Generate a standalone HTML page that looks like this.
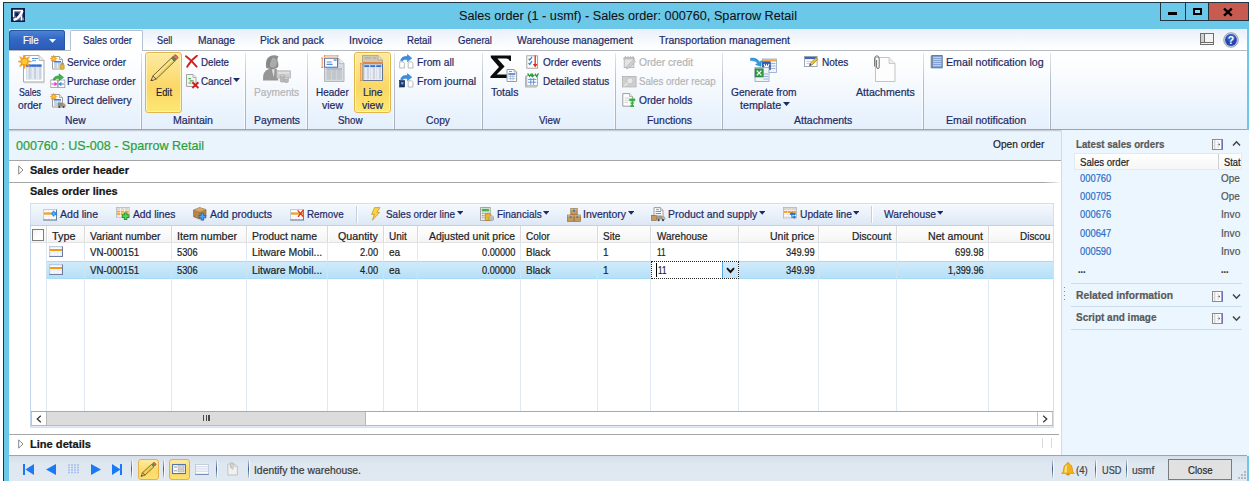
<!DOCTYPE html>
<html><head><meta charset="utf-8"><title>Sales order</title>
<style>
html,body{margin:0;padding:0;background:#fff;}
body{width:1249px;height:481px;overflow:hidden;position:relative;font-family:"Liberation Sans",sans-serif;}
#w div,#w span.t,#w svg{position:absolute;}
#w span.t{white-space:pre;line-height:16px;height:16px;transform-origin:0 50%;-webkit-text-stroke:0.22px currentColor;}
#w{position:absolute;left:0;top:0;width:1249px;height:481px;overflow:hidden;}
</style></head><body><div id="w">
<div style="left:3px;top:2px;width:1246px;height:479px;background:#1f3540"></div>
<div style="left:4px;top:3px;width:1245px;height:478px;background:#6bc8e8"></div>
<div style="left:9px;top:29px;width:1238px;height:452px;background:#fff"></div>
<div style="left:1160px;top:2px;width:89px;height:19px;background:#1f3540"></div>
<div style="left:1161px;top:3px;width:24px;height:17px;background:#6bc8e8"></div>
<div style="left:1186px;top:3px;width:22px;height:17px;background:#6bc8e8"></div>
<div style="left:1209px;top:3px;width:39px;height:17px;background:#c75b50"></div>
<div style="left:1168px;top:12px;width:9px;height:3px;background:#000"></div>
<div style="left:1193px;top:8px;width:9px;height:7px;box-sizing:border-box;border:2px solid #000;border-top-width:2px;background:#8fd6ee"></div>
<svg style="left:1222px;top:7px" width="12" height="10" viewBox="0 0 12 10"><path d="M2 1.6 L9.8 8.6 M9.8 1.6 L2 8.6" stroke="#000" stroke-width="2.4" fill="none"/></svg>
<div style="left:11px;top:8px;width:14px;height:14px;background:#0e1b50"></div>
<svg style="left:11px;top:8px" width="14" height="14" viewBox="0 0 14 14"><rect x="2" y="2" width="10" height="10.4" fill="#5a6a94"/><path d="M2 2.5 H12 M2.5 2 V9" stroke="#fff" stroke-width="1.3" fill="none"/><path d="M4.2 4.5 H7.4 V8 H4.2Z" fill="#101c4c"/><path d="M11.4 2.6 Q9.6 9.4 2.6 12" stroke="#fff" stroke-width="2.4" fill="none"/><path d="M5.6 6.2 L7.8 6.2 L5 10.2 Z" fill="#101c4c"/><path d="M10.4 7.6 V12.4" stroke="#fff" stroke-width="1.2"/><path d="M12.1 9.6 V12.4" stroke="#dfe4f0" stroke-width="0.9"/></svg>
<div style="left:9px;top:29px;width:1238px;height:21px;background:linear-gradient(#e8f0fa,#f6f9fd 55%,#ffffff)"></div>
<div style="left:9px;top:50px;width:1238px;height:1px;background:#b6bbc3"></div>
<div style="left:9px;top:30px;width:56px;height:20px;background:linear-gradient(#4f86d6,#3368c4 45%,#2a5bb8);border-radius:3px 3px 0 0;box-shadow:inset 0 0 0 1px #2a55a5"></div>
<svg style="left:49.4px;top:39.4px" width="7" height="4" viewBox="0 0 7 4"><path d="M0 0 H7 L3.5 3.8 Z" fill="#fff"/></svg>
<div style="left:70px;top:30px;width:73px;height:21px;box-sizing:border-box;background:#fff;border:1px solid #b4c2d4;border-bottom:none;border-radius:2px 2px 0 0"></div>
<svg style="left:1200px;top:33px" width="14" height="12" viewBox="0 0 14 12"><rect x="0.5" y="0.5" width="13" height="11" fill="#f4f4f4" stroke="#6e6e6e"/><rect x="1" y="1" width="3" height="8" fill="#cfcfcf"/><path d="M4.5 1 V9 M1 9.5 H13" stroke="#6e6e6e" fill="none"/></svg>
<svg style="left:1223px;top:32px" width="16" height="16" viewBox="0 0 16 16"><circle cx="8" cy="8" r="7.3" fill="#c9ced8" stroke="#8b93a3" stroke-width="0.8"/><circle cx="8" cy="8" r="5.9" fill="#2445b0"/><circle cx="8" cy="6" r="4" fill="#4a6fd6" opacity="0.55"/><text x="8" y="12" text-anchor="middle" font-family="Liberation Sans" font-weight="700" font-size="10.5" fill="#fff">?</text></svg>
<div style="left:9px;top:51px;width:1238px;height:78px;background:linear-gradient(#ffffff,#f8fbfe 35%,#eaf3fc 80%,#e5f0fc)"></div>
<div style="left:9px;top:129px;width:1238px;height:1px;background:#9da4ae"></div>
<div style="left:9px;top:130px;width:1238px;height:1px;background:#c8cfd8"></div>
<div style="left:9px;top:131px;width:1238px;height:1px;background:#e4e9ef"></div>
<div style="left:141px;top:53px;width:1px;height:76px;background:linear-gradient(rgba(176,186,200,0.35),#b3bcc9 40%,#a9b2bf)"></div>
<div style="left:140px;top:53px;width:1px;height:76px;background:rgba(255,255,255,0.65)"></div>
<div style="left:245px;top:53px;width:1px;height:76px;background:linear-gradient(rgba(176,186,200,0.35),#b3bcc9 40%,#a9b2bf)"></div>
<div style="left:244px;top:53px;width:1px;height:76px;background:rgba(255,255,255,0.65)"></div>
<div style="left:307px;top:53px;width:1px;height:76px;background:linear-gradient(rgba(176,186,200,0.35),#b3bcc9 40%,#a9b2bf)"></div>
<div style="left:306px;top:53px;width:1px;height:76px;background:rgba(255,255,255,0.65)"></div>
<div style="left:394px;top:53px;width:1px;height:76px;background:linear-gradient(rgba(176,186,200,0.35),#b3bcc9 40%,#a9b2bf)"></div>
<div style="left:393px;top:53px;width:1px;height:76px;background:rgba(255,255,255,0.65)"></div>
<div style="left:482px;top:53px;width:1px;height:76px;background:linear-gradient(rgba(176,186,200,0.35),#b3bcc9 40%,#a9b2bf)"></div>
<div style="left:481px;top:53px;width:1px;height:76px;background:rgba(255,255,255,0.65)"></div>
<div style="left:615px;top:53px;width:1px;height:76px;background:linear-gradient(rgba(176,186,200,0.35),#b3bcc9 40%,#a9b2bf)"></div>
<div style="left:614px;top:53px;width:1px;height:76px;background:rgba(255,255,255,0.65)"></div>
<div style="left:722px;top:53px;width:1px;height:76px;background:linear-gradient(rgba(176,186,200,0.35),#b3bcc9 40%,#a9b2bf)"></div>
<div style="left:721px;top:53px;width:1px;height:76px;background:rgba(255,255,255,0.65)"></div>
<div style="left:923px;top:53px;width:1px;height:76px;background:linear-gradient(rgba(176,186,200,0.35),#b3bcc9 40%,#a9b2bf)"></div>
<div style="left:922px;top:53px;width:1px;height:76px;background:rgba(255,255,255,0.65)"></div>
<div style="left:1050px;top:53px;width:1px;height:76px;background:linear-gradient(rgba(176,186,200,0.35),#b3bcc9 40%,#a9b2bf)"></div>
<div style="left:1049px;top:53px;width:1px;height:76px;background:rgba(255,255,255,0.65)"></div>
<div style="left:145px;top:52px;width:37px;height:61px;box-sizing:border-box;background:linear-gradient(#fdeaa3,#fce07e 35%,#fbd764 58%,#fde773);border:1px solid #e3b64c;border-radius:3px;box-shadow:inset 0 0 0 1px rgba(255,248,210,0.7)"></div>
<div style="left:354px;top:52px;width:37px;height:61px;box-sizing:border-box;background:linear-gradient(#fdeaa3,#fce07e 35%,#fbd764 58%,#fde773);border:1px solid #e3b64c;border-radius:3px;box-shadow:inset 0 0 0 1px rgba(255,248,210,0.7)"></div>
<svg style="left:782.6px;top:102.4px" width="7" height="4" viewBox="0 0 7 4"><path d="M0 0 H7 L3.5 4 Z" fill="#1e2a66"/></svg>
<svg style="left:233.4px;top:78.4px" width="7" height="4" viewBox="0 0 7 4"><path d="M0 0 H7 L3.5 4 Z" fill="#1e2a66"/></svg>
<div style="left:9px;top:132px;width:1053px;height:28px;background:#eaf4fc"></div>
<div style="left:9px;top:160px;width:1053px;height:1px;background:#a6a6a6"></div>
<div style="left:9px;top:182px;width:1050px;height:1px;background:linear-gradient(90deg,#a6a6a6 98.5%,rgba(166,166,166,0.2))"></div>
<svg style="left:18px;top:165px" width="6" height="10" viewBox="0 0 6 10"><path d="M0.7 0.9 L5 5 L0.7 9.1 Z" fill="#fff" stroke="#7a7a7a" stroke-width="0.9"/></svg>
<div style="left:30px;top:203px;width:1024px;height:23px;box-sizing:border-box;background:linear-gradient(#f6f9fd,#e9f1fa 50%,#dde8f5);border:1px solid #d3dfee"></div>
<svg style="left:456.6px;top:211.2px" width="6.4" height="3.7" viewBox="0 0 7 4" preserveAspectRatio="none"><path d="M0 0 H7 L3.5 4 Z" fill="#1e2a66"/></svg>
<svg style="left:542.8px;top:211.2px" width="6.4" height="3.7" viewBox="0 0 7 4" preserveAspectRatio="none"><path d="M0 0 H7 L3.5 4 Z" fill="#1e2a66"/></svg>
<svg style="left:628.1px;top:211.2px" width="6.4" height="3.7" viewBox="0 0 7 4" preserveAspectRatio="none"><path d="M0 0 H7 L3.5 4 Z" fill="#1e2a66"/></svg>
<svg style="left:759px;top:211.2px" width="6.4" height="3.7" viewBox="0 0 7 4" preserveAspectRatio="none"><path d="M0 0 H7 L3.5 4 Z" fill="#1e2a66"/></svg>
<svg style="left:852.6px;top:211.2px" width="6.4" height="3.7" viewBox="0 0 7 4" preserveAspectRatio="none"><path d="M0 0 H7 L3.5 4 Z" fill="#1e2a66"/></svg>
<svg style="left:936.6px;top:211.2px" width="6.4" height="3.7" viewBox="0 0 7 4" preserveAspectRatio="none"><path d="M0 0 H7 L3.5 4 Z" fill="#1e2a66"/></svg>
<div style="left:356px;top:206px;width:1px;height:17px;background:#c3d0e0"></div>
<div style="left:357px;top:206px;width:1px;height:17px;background:#fff"></div>
<div style="left:871px;top:206px;width:1px;height:17px;background:#c3d0e0"></div>
<div style="left:872px;top:206px;width:1px;height:17px;background:#fff"></div>
<div style="left:30px;top:226px;width:1024px;height:201px;box-sizing:border-box;background:#fff;border-left:1px solid #c3d5ea;border-right:1px solid #d5dfec"></div>
<div style="left:30px;top:225px;width:1024px;height:1px;background:#bcd2ea"></div>
<div style="left:31px;top:226px;width:1022px;height:17px;background:linear-gradient(#fdfdfd,#f9f9f9 60%,#f2f2f2)"></div>
<div style="left:31px;top:242px;width:1022px;height:1px;background:#e2e2e2"></div>
<div style="left:46px;top:261px;width:1007px;height:18px;box-sizing:border-box;background:linear-gradient(#d0ebfb,#b5e0f8);border-top:1px solid #a8d9f5;border-bottom:1px solid #a9dbf6"></div>
<div style="left:46px;top:226px;width:1px;height:16px;background:#d9d9d9"></div>
<div style="left:47px;top:226px;width:1px;height:16px;background:#fff"></div>
<div style="left:46px;top:243px;width:1px;height:168px;background:#e1e9f5"></div>
<div style="left:46px;top:261px;width:1px;height:18px;background:#cfe4f3"></div>
<div style="left:84px;top:226px;width:1px;height:16px;background:#d9d9d9"></div>
<div style="left:85px;top:226px;width:1px;height:16px;background:#fff"></div>
<div style="left:84px;top:243px;width:1px;height:168px;background:#e1e9f5"></div>
<div style="left:84px;top:261px;width:1px;height:18px;background:#cfe4f3"></div>
<div style="left:171px;top:226px;width:1px;height:16px;background:#d9d9d9"></div>
<div style="left:172px;top:226px;width:1px;height:16px;background:#fff"></div>
<div style="left:171px;top:243px;width:1px;height:168px;background:#e1e9f5"></div>
<div style="left:171px;top:261px;width:1px;height:18px;background:#cfe4f3"></div>
<div style="left:246px;top:226px;width:1px;height:16px;background:#d9d9d9"></div>
<div style="left:247px;top:226px;width:1px;height:16px;background:#fff"></div>
<div style="left:246px;top:243px;width:1px;height:168px;background:#e1e9f5"></div>
<div style="left:246px;top:261px;width:1px;height:18px;background:#cfe4f3"></div>
<div style="left:327px;top:226px;width:1px;height:16px;background:#d9d9d9"></div>
<div style="left:328px;top:226px;width:1px;height:16px;background:#fff"></div>
<div style="left:327px;top:243px;width:1px;height:168px;background:#e1e9f5"></div>
<div style="left:327px;top:261px;width:1px;height:18px;background:#cfe4f3"></div>
<div style="left:383px;top:226px;width:1px;height:16px;background:#d9d9d9"></div>
<div style="left:384px;top:226px;width:1px;height:16px;background:#fff"></div>
<div style="left:383px;top:243px;width:1px;height:168px;background:#e1e9f5"></div>
<div style="left:383px;top:261px;width:1px;height:18px;background:#cfe4f3"></div>
<div style="left:417px;top:226px;width:1px;height:16px;background:#d9d9d9"></div>
<div style="left:418px;top:226px;width:1px;height:16px;background:#fff"></div>
<div style="left:417px;top:243px;width:1px;height:168px;background:#e1e9f5"></div>
<div style="left:417px;top:261px;width:1px;height:18px;background:#cfe4f3"></div>
<div style="left:520px;top:226px;width:1px;height:16px;background:#d9d9d9"></div>
<div style="left:521px;top:226px;width:1px;height:16px;background:#fff"></div>
<div style="left:520px;top:243px;width:1px;height:168px;background:#e1e9f5"></div>
<div style="left:520px;top:261px;width:1px;height:18px;background:#cfe4f3"></div>
<div style="left:597px;top:226px;width:1px;height:16px;background:#d9d9d9"></div>
<div style="left:598px;top:226px;width:1px;height:16px;background:#fff"></div>
<div style="left:597px;top:243px;width:1px;height:168px;background:#e1e9f5"></div>
<div style="left:597px;top:261px;width:1px;height:18px;background:#cfe4f3"></div>
<div style="left:650px;top:226px;width:1px;height:16px;background:#d9d9d9"></div>
<div style="left:651px;top:226px;width:1px;height:16px;background:#fff"></div>
<div style="left:650px;top:243px;width:1px;height:168px;background:#e1e9f5"></div>
<div style="left:650px;top:261px;width:1px;height:18px;background:#cfe4f3"></div>
<div style="left:738px;top:226px;width:1px;height:16px;background:#d9d9d9"></div>
<div style="left:739px;top:226px;width:1px;height:16px;background:#fff"></div>
<div style="left:738px;top:243px;width:1px;height:168px;background:#e1e9f5"></div>
<div style="left:738px;top:261px;width:1px;height:18px;background:#cfe4f3"></div>
<div style="left:818px;top:226px;width:1px;height:16px;background:#d9d9d9"></div>
<div style="left:819px;top:226px;width:1px;height:16px;background:#fff"></div>
<div style="left:818px;top:243px;width:1px;height:168px;background:#e1e9f5"></div>
<div style="left:818px;top:261px;width:1px;height:18px;background:#cfe4f3"></div>
<div style="left:896px;top:226px;width:1px;height:16px;background:#d9d9d9"></div>
<div style="left:897px;top:226px;width:1px;height:16px;background:#fff"></div>
<div style="left:896px;top:243px;width:1px;height:168px;background:#e1e9f5"></div>
<div style="left:896px;top:261px;width:1px;height:18px;background:#cfe4f3"></div>
<div style="left:988px;top:226px;width:1px;height:16px;background:#d9d9d9"></div>
<div style="left:989px;top:226px;width:1px;height:16px;background:#fff"></div>
<div style="left:988px;top:243px;width:1px;height:168px;background:#e1e9f5"></div>
<div style="left:988px;top:261px;width:1px;height:18px;background:#cfe4f3"></div>
<div style="left:32px;top:229px;width:12px;height:12px;box-sizing:border-box;border:1px solid #7d7d7d;background:linear-gradient(135deg,#f2f2f2,#fff 60%)"></div>
<div style="left:651px;top:261px;width:88px;height:18px;box-sizing:border-box;background:#fff;border:1px dotted #222"></div>
<div style="left:722px;top:262px;width:1px;height:16px;background:#58a6de"></div>
<div style="left:723px;top:262px;width:15px;height:16px;background:linear-gradient(#d6ecfb,#c3e2f9)"></div>
<svg style="left:726px;top:267px" width="9" height="7" viewBox="0 0 9 7"><path d="M1 1.2 L4.5 5 L8 1.2" stroke="#111" stroke-width="1.9" fill="none"/></svg>
<div style="left:656px;top:263px;width:1px;height:14px;background:#000"></div>
<svg style="left:49px;top:246.2px" width="14" height="11" viewBox="0 0 14 11"><rect x="0.5" y="0.5" width="13" height="10" fill="#e0e9f7" stroke="#bcc7da" stroke-width="0.9"/><path d="M1 2.7 H13 M1 5.4 H13 M1 8 H13 M3.8 1 V10 M7 1 V10 M10.2 1 V10" stroke="#fff" stroke-width="0.9"/><rect x="0.9" y="3" width="12.2" height="2.1" fill="#f29a1c"/><path d="M0.3 10.6 H13.9 M13.5 0.6 V10.8" stroke="#6b7a96" stroke-width="1" fill="none"/></svg>
<svg style="left:49px;top:264.4px" width="14" height="11" viewBox="0 0 14 11"><rect x="0.5" y="0.5" width="13" height="10" fill="#e0e9f7" stroke="#bcc7da" stroke-width="0.9"/><path d="M1 2.7 H13 M1 5.4 H13 M1 8 H13 M3.8 1 V10 M7 1 V10 M10.2 1 V10" stroke="#fff" stroke-width="0.9"/><rect x="0.9" y="3" width="12.2" height="2.1" fill="#f29a1c"/><path d="M0.3 10.6 H13.9 M13.5 0.6 V10.8" stroke="#6b7a96" stroke-width="1" fill="none"/></svg>
<div style="left:31px;top:411px;width:1022px;height:1px;background:#a9a9a9"></div>
<div style="left:31px;top:412px;width:1022px;height:13px;background:#fff"></div>
<div style="left:31px;top:425px;width:1022px;height:1px;background:#b9b9b9"></div>
<div style="left:31px;top:426px;width:1022px;height:2px;background:#e1eaf5"></div>
<div style="left:31px;top:412px;width:1px;height:13px;background:#c4c4c4"></div>
<div style="left:46px;top:412px;width:320px;height:13px;background:#dcdcdc;box-sizing:border-box;border-left:1px solid #b8b8b8;border-right:1px solid #b8b8b8"></div>
<div style="left:202.8px;top:415px;width:1.6px;height:6px;background:#4a4a4a"></div>
<div style="left:205.6px;top:415px;width:1.6px;height:6px;background:#4a4a4a"></div>
<div style="left:208.3px;top:415px;width:1.6px;height:6px;background:#4a4a4a"></div>
<div style="left:1037px;top:412px;width:1px;height:13px;background:#c4c4c4"></div>
<div style="left:1052px;top:412px;width:1px;height:13px;background:#c4c4c4"></div>
<svg style="left:36px;top:415px" width="6" height="8" viewBox="0 0 6 8"><path d="M4.8 0.8 L1.2 4 L4.8 7.2" stroke="#333" stroke-width="1.2" fill="none"/></svg>
<svg style="left:1042px;top:415px" width="6" height="8" viewBox="0 0 6 8"><path d="M1.2 0.8 L4.8 4 L1.2 7.2" stroke="#333" stroke-width="1.2" fill="none"/></svg>
<div style="left:30px;top:427px;width:1024px;height:1px;background:#d5e0ee"></div>
<div style="left:9px;top:434px;width:1050px;height:1px;background:#a6a6a6"></div>
<svg style="left:18px;top:439px" width="6" height="10" viewBox="0 0 6 10"><path d="M0.7 0.9 L5 5 L0.7 9.1 Z" fill="#fff" stroke="#7a7a7a" stroke-width="0.9"/></svg>
<div style="left:1042px;top:438px;width:1px;height:10px;background:#d9d9d9"></div>
<div style="left:1051px;top:438px;width:1px;height:10px;background:#d9d9d9"></div>
<div style="left:1061px;top:130px;width:1px;height:326px;background:#cbdceb"></div>
<div style="left:1062px;top:130px;width:1185px;height:326px;background:#ecf6fe"></div>
<div style="left:1062px;top:130px;width:185px;height:326px;background:#ecf6fe"></div>
<div style="left:1064px;top:287px;width:1px;height:1px;background:#8a8a8a"></div>
<div style="left:1064px;top:291px;width:1px;height:1px;background:#8a8a8a"></div>
<div style="left:1064px;top:295px;width:1px;height:1px;background:#8a8a8a"></div>
<div style="left:1064px;top:299px;width:1px;height:1px;background:#8a8a8a"></div>
<div style="left:1075px;top:154px;width:166px;height:15px;background:linear-gradient(#ffffff,#f6f6f6);box-shadow:0 0 0 1px #e3e9f0"></div>
<div style="left:1218px;top:154px;width:1px;height:15px;background:#d0d0d0"></div>
<div style="left:1071px;top:283px;width:171px;height:1px;background:#c9dbec"></div>
<div style="left:1071px;top:306px;width:171px;height:1px;background:#c9dbec"></div>
<div style="left:1071px;top:329px;width:171px;height:1px;background:#c9dbec"></div>
<svg style="left:1212px;top:139px" width="11" height="11" viewBox="0 0 11 11"><rect x="0.5" y="0.5" width="10" height="10" fill="#fff" stroke="#8a8a8a"/><path d="M2.8 1 V10" stroke="#c4c4c4"/><path d="M1 3.6 H2.8 M1 6.8 H2.8" stroke="#d8d8d8" stroke-width="0.8"/><path d="M4.6 3 H7 M4.6 8 H7 M4.6 5.5 H6.6" stroke="#c9c9c9" stroke-width="0.8"/><path d="M6.6 4 L8.2 5.5 L6.6 7 Z" fill="#555"/><path d="M10 1 V10" stroke="#5b5fd0" stroke-width="1.2"/></svg>
<svg style="left:1212px;top:291px" width="11" height="11" viewBox="0 0 11 11"><rect x="0.5" y="0.5" width="10" height="10" fill="#fff" stroke="#8a8a8a"/><path d="M2.8 1 V10" stroke="#c4c4c4"/><path d="M1 3.6 H2.8 M1 6.8 H2.8" stroke="#d8d8d8" stroke-width="0.8"/><path d="M4.6 3 H7 M4.6 8 H7 M4.6 5.5 H6.6" stroke="#c9c9c9" stroke-width="0.8"/><path d="M6.6 4 L8.2 5.5 L6.6 7 Z" fill="#555"/><path d="M10 1 V10" stroke="#5b5fd0" stroke-width="1.2"/></svg>
<svg style="left:1212px;top:313px" width="11" height="11" viewBox="0 0 11 11"><rect x="0.5" y="0.5" width="10" height="10" fill="#fff" stroke="#8a8a8a"/><path d="M2.8 1 V10" stroke="#c4c4c4"/><path d="M1 3.6 H2.8 M1 6.8 H2.8" stroke="#d8d8d8" stroke-width="0.8"/><path d="M4.6 3 H7 M4.6 8 H7 M4.6 5.5 H6.6" stroke="#c9c9c9" stroke-width="0.8"/><path d="M6.6 4 L8.2 5.5 L6.6 7 Z" fill="#555"/><path d="M10 1 V10" stroke="#5b5fd0" stroke-width="1.2"/></svg>
<svg style="left:1232.2px;top:140.2px" width="9" height="7" viewBox="0 0 9 7"><path d="M1 5.6 L4.5 1.8 L8 5.6" stroke="#444" stroke-width="1.5" fill="none"/></svg>
<svg style="left:1232px;top:293px" width="9" height="7" viewBox="0 0 9 7"><path d="M1 1.4 L4.5 5.2 L8 1.4" stroke="#444" stroke-width="1.5" fill="none"/></svg>
<svg style="left:1232px;top:315px" width="9" height="7" viewBox="0 0 9 7"><path d="M1 1.4 L4.5 5.2 L8 1.4" stroke="#444" stroke-width="1.5" fill="none"/></svg>
<div style="left:9px;top:455px;width:1238px;height:1px;background:#98a5b5"></div>
<div style="left:9px;top:456px;width:1238px;height:25px;background:linear-gradient(#d5dfea,#dfe7f0 30%,#e0e8f1)"></div>
<div style="left:131px;top:460px;width:1px;height:18px;background:linear-gradient(rgba(60,90,130,0.2),#40608a 50%,rgba(60,90,130,0.2))"></div>
<div style="left:132px;top:460px;width:1px;height:18px;background:rgba(255,255,255,0.7)"></div>
<div style="left:163px;top:460px;width:1px;height:18px;background:linear-gradient(rgba(60,90,130,0.2),#40608a 50%,rgba(60,90,130,0.2))"></div>
<div style="left:164px;top:460px;width:1px;height:18px;background:rgba(255,255,255,0.7)"></div>
<div style="left:216px;top:460px;width:1px;height:18px;background:linear-gradient(rgba(60,90,130,0.2),#40608a 50%,rgba(60,90,130,0.2))"></div>
<div style="left:217px;top:460px;width:1px;height:18px;background:rgba(255,255,255,0.7)"></div>
<div style="left:248px;top:460px;width:1px;height:18px;background:linear-gradient(rgba(60,90,130,0.2),#40608a 50%,rgba(60,90,130,0.2))"></div>
<div style="left:249px;top:460px;width:1px;height:18px;background:rgba(255,255,255,0.7)"></div>
<div style="left:1052px;top:460px;width:1px;height:18px;background:linear-gradient(rgba(60,90,130,0.2),#40608a 50%,rgba(60,90,130,0.2))"></div>
<div style="left:1053px;top:460px;width:1px;height:18px;background:rgba(255,255,255,0.7)"></div>
<div style="left:1095px;top:460px;width:1px;height:18px;background:linear-gradient(rgba(60,90,130,0.2),#40608a 50%,rgba(60,90,130,0.2))"></div>
<div style="left:1096px;top:460px;width:1px;height:18px;background:rgba(255,255,255,0.7)"></div>
<div style="left:1126px;top:460px;width:1px;height:18px;background:linear-gradient(rgba(60,90,130,0.2),#40608a 50%,rgba(60,90,130,0.2))"></div>
<div style="left:1127px;top:460px;width:1px;height:18px;background:rgba(255,255,255,0.7)"></div>
<div style="left:138px;top:459px;width:21px;height:21px;box-sizing:border-box;background:linear-gradient(#fde9a0,#fcd968 60%,#fde173);border:1px solid #e5b045;border-radius:3px"></div>
<div style="left:169px;top:459px;width:21px;height:21px;box-sizing:border-box;background:linear-gradient(#fde9a0,#fcd968 60%,#fde173);border:1px solid #e5b045;border-radius:3px"></div>
<div style="left:1168px;top:459px;width:64px;height:21px;box-sizing:border-box;background:#e1e1e1;border:1px solid #7c7c7c"></div>
<svg style="left:22px;top:463.7px" width="101" height="11" viewBox="0 0 101 11"><path d="M1 0 H3 V11 H1 Z M12 0 V11 L3.5 5.5 Z" fill="#1b79f5"/><path d="M34 0 V11 L24 5.5 Z" fill="#1b79f5"/><path d="M69 0 V11 L79 5.5 Z" fill="#1b79f5"/><path d="M90 0 V11 L98.5 5.5 Z M98 0 H100 V11 H98 Z" fill="#1b79f5"/></svg>
<svg style="left:68px;top:464px" width="11" height="11" viewBox="0 0 11 11"><path d="M0 1 H11 M0 3.5 H11 M0 6 H11 M0 8.5 H11" stroke="#a3c0ef" stroke-width="1.6" stroke-dasharray="2 1"/></svg>
<div style="left:1244px;top:471px;width:2px;height:2px;background:#b0b8c2"></div>
<div style="left:1241px;top:474px;width:2px;height:2px;background:#b0b8c2"></div>
<div style="left:1244px;top:474px;width:2px;height:2px;background:#b0b8c2"></div>
<div style="left:1238px;top:477px;width:2px;height:2px;background:#b0b8c2"></div>
<div style="left:1241px;top:477px;width:2px;height:2px;background:#b0b8c2"></div>
<div style="left:1244px;top:477px;width:2px;height:2px;background:#b0b8c2"></div>
<svg style="left:17.5px;top:55px" width="28" height="29" viewBox="0 0 28 29"><path d="M6.5 27.5 H27 V28.3 H6.5Z" fill="#d9d9d9"/><path d="M5.5 0.5 H21.0 L26.0 5.5 V27.0 H5.5 Z" fill="#fff" stroke="#a9a9a9" stroke-width="1"/><path d="M21.0 0.5 V5.5 H26.0" fill="#ececec" stroke="#a9a9a9" stroke-width="0.8"/><rect x="8" y="9.6" width="15.5" height="2" fill="#3f7fd6"/><rect x="8" y="12" width="4.9" height="12.5" fill="#c9d1de"/><rect x="8" y="9.6" width="4.9" height="2" fill="#2f6fd0"/><rect x="8.6" y="12.4" width="2" height="12" fill="#e6ebf3"/><rect x="13.3" y="12" width="4.9" height="12.5" fill="#c9d1de"/><rect x="13.3" y="9.6" width="4.9" height="2" fill="#2f6fd0"/><rect x="13.9" y="12.4" width="2" height="12" fill="#e6ebf3"/><rect x="18.6" y="12" width="4.9" height="12.5" fill="#c9d1de"/><rect x="18.6" y="9.6" width="4.9" height="2" fill="#2f6fd0"/><rect x="19.200000000000003" y="12.4" width="2" height="12" fill="#e6ebf3"/><path d="M14 3.5 H20 M14 5.8 H18" stroke="#5b93dd" stroke-width="1.1"/><polygon points="6.60,-0.60 7.86,3.55 11.69,1.51 9.65,5.34 13.80,6.60 9.65,7.86 11.69,11.69 7.86,9.65 6.60,13.80 5.34,9.65 1.51,11.69 3.55,7.86 -0.60,6.60 3.55,5.34 1.51,1.51 5.34,3.55" fill="#f7a11a" stroke="#f08a0c" stroke-width="0.4"/><circle cx="6.6" cy="6.6" r="2.59" fill="#fdc93a"/></svg>
<svg style="left:49.5px;top:54.5px" width="16" height="16" viewBox="0 0 16 16"><path d="M2.5 1.5 H9.5 L12.5 4.5 V14.0 H2.5 Z" fill="#fff" stroke="#9c9c9c" stroke-width="1"/><path d="M9.5 1.5 V4.5 H12.5" fill="#ececec" stroke="#9c9c9c" stroke-width="0.8"/><rect x="4" y="6" width="7" height="1.6" fill="#3f7fd6"/><rect x="4" y="8" width="3" height="5" fill="#c9d1de"/><rect x="7.6" y="8" width="3.4" height="5" fill="#c9d1de"/><polygon points="3.60,0.00 4.25,2.03 6.15,1.05 5.17,2.95 7.20,3.60 5.17,4.25 6.15,6.15 4.25,5.17 3.60,7.20 2.95,5.17 1.05,6.15 2.03,4.25 0.00,3.60 2.03,2.95 1.05,1.05 2.95,2.03" fill="#f7a11a" stroke="#f08a0c" stroke-width="0.4"/><circle cx="3.6" cy="3.6" r="1.30" fill="#fdc93a"/><rect x="10.6" y="9.4" width="3.6" height="4.8" rx="0.6" fill="#eab92a" stroke="#a87c10" stroke-width="0.5"/><path d="M11.4 9.4 V8 Q12.4 6.4 13.4 8 V9.4" fill="none" stroke="#8a8a8a" stroke-width="0.8"/></svg>
<svg style="left:49.5px;top:73px" width="16" height="16" viewBox="0 0 16 16"><rect x="0.8" y="7" width="6.6" height="7.6" fill="#fff" stroke="#9c9c9c" stroke-width="0.8"/><rect x="8.2" y="7" width="6.6" height="7.6" fill="#fff" stroke="#9c9c9c" stroke-width="0.8"/><path d="M1.6 11 H6.4 M4.4 9.4 L6.6 11 L4.4 12.6" stroke="#e33cbf" stroke-width="1.2" fill="none"/><path d="M14 11 H9.4 M11.4 9.4 L9.2 11 L11.4 12.6" stroke="#2f8fe0" stroke-width="1.2" fill="none"/><path d="M3 7 Q4 2.6 9 3 V0.8 L13.6 4.4 L9 7.6 V5.4 Q6 5 5 7 Z" fill="#3fb54a" stroke="#23862e" stroke-width="0.5"/></svg>
<svg style="left:50px;top:92.6px" width="16" height="16" viewBox="0 0 16 16"><path d="M2.5 1.5 H9.5 L12.5 4.5 V14.0 H2.5 Z" fill="#fff" stroke="#9c9c9c" stroke-width="1"/><path d="M9.5 1.5 V4.5 H12.5" fill="#ececec" stroke="#9c9c9c" stroke-width="0.8"/><rect x="4" y="6" width="7" height="1.6" fill="#3f7fd6"/><rect x="4" y="8" width="3" height="5" fill="#c9d1de"/><rect x="7.6" y="8" width="3.4" height="5" fill="#c9d1de"/><polygon points="3.60,0.00 4.25,2.03 6.15,1.05 5.17,2.95 7.20,3.60 5.17,4.25 6.15,6.15 4.25,5.17 3.60,7.20 2.95,5.17 1.05,6.15 2.03,4.25 0.00,3.60 2.03,2.95 1.05,1.05 2.95,2.03" fill="#f7a11a" stroke="#f08a0c" stroke-width="0.4"/><circle cx="3.6" cy="3.6" r="1.30" fill="#fdc93a"/><rect x="7.6" y="9.6" width="4.6" height="3.8" fill="#8a8a8a"/><path d="M12.2 10.6 H14.2 L15.4 12 V13.4 H12.2 Z" fill="#b8a070" stroke="#7c7c7c" stroke-width="0.4"/><circle cx="9.4" cy="14" r="1.1" fill="#444"/><circle cx="13.6" cy="14" r="1.1" fill="#444"/></svg>
<svg style="left:149.1px;top:52.9px" width="32.3" height="28.5" viewBox="-3 -1 34 30"><g transform="rotate(-44 14 14)"><rect x="-1.5" y="11.6" width="27" height="4.8" fill="#f6d56a" stroke="#5b4a1e" stroke-width="0.8"/><path d="M-1.5 13.2 H25.5" stroke="#fbe9a6" stroke-width="1.2"/><path d="M-1.5 11.6 L-7 14 L-1.5 16.4 Z" fill="#e8c9a0" stroke="#5b4a1e" stroke-width="0.8"/><path d="M-7 14 L-5 13.1 V14.9 Z" fill="#333"/><rect x="25.5" y="11.6" width="2.2" height="4.8" fill="#3f9a58" stroke="#5b4a1e" stroke-width="0.5"/><rect x="27.7" y="11.6" width="3.4" height="4.8" rx="1" fill="#e46a6a" stroke="#5b4a1e" stroke-width="0.6"/></g></svg>
<svg style="left:185px;top:55.2px" width="13" height="13" viewBox="0 0 13 13"><path d="M1 1.2 Q5 4 11.6 11.6" stroke="#d3201f" stroke-width="2" fill="none" stroke-linecap="round"/><path d="M12 0.8 Q6 5 2.2 11.8" stroke="#d3201f" stroke-width="1.8" fill="none" stroke-linecap="round"/></svg>
<svg style="left:184.6px;top:73.6px" width="15" height="15" viewBox="0 0 15 15"><path d="M1.5 0.5 H8.0 L11.0 3.5 V12.5 H1.5 Z" fill="#f4f4f4" stroke="#a4a4a4" stroke-width="1"/><path d="M8.0 0.5 V3.5 H11.0" fill="#ececec" stroke="#a4a4a4" stroke-width="0.8"/><path d="M3.4 4.6 H6 M4.6 6.8 H8.6 M3.4 9 H6.4" stroke="#4fae4a" stroke-width="1.2"/><path d="M7.4 8.2 L13.4 14 M13.4 8.2 L7.4 14" stroke="#d3201f" stroke-width="1.9"/></svg>
<svg style="left:261.6px;top:54.6px" width="30" height="29" viewBox="0 0 30 29"><path d="M1 25.4 Q0.4 15.6 7 14 L14.6 14 Q16.2 16 16.2 25.4 Z" fill="#969696"/><path d="M9.8 14.2 L12.6 14.2 L11.8 22.5 Z" fill="#e2e2e2"/><path d="M4.2 13 Q2.6 3 9 0.8 Q13 -0.4 16.6 1.6 Q15 3 15.6 6 Q17.2 10 15.6 12.6 Q13 14.6 8 14 Z" fill="#8d8d8d"/><ellipse cx="11" cy="7.8" rx="3.9" ry="5" fill="#ababab"/><path d="M5 9 Q5 3 11 2.4 Q8 5 7.6 12 Q6 12 5 9Z" fill="#868686"/><rect x="14.8" y="15.8" width="13.8" height="7.2" fill="#cdcdcd" stroke="#b2b2b2" stroke-width="0.7"/><rect x="16.2" y="17" width="11" height="1.8" fill="#e1e1e1"/><path d="M18.2 20.4 V26.599999999999998 Q20.3 28.0 22.4 26.599999999999998 V20.4 Z" fill="#b9b9b9" stroke="#9b9b9b" stroke-width="0.5"/><ellipse cx="20.3" cy="20.4" rx="2.1" ry="0.9" fill="#dedede" stroke="#a2a2a2" stroke-width="0.5"/><path d="M22 23.2 V26.999999999999996 Q24.2 28.4 26.4 26.999999999999996 V23.2 Z" fill="#b9b9b9" stroke="#9b9b9b" stroke-width="0.5"/><ellipse cx="24.2" cy="23.2" rx="2.2" ry="0.9" fill="#dedede" stroke="#a2a2a2" stroke-width="0.5"/></svg>
<svg style="left:320.5px;top:54.6px" width="24" height="28" viewBox="0 0 24 28"><path d="M3.5 3.5 H18.0 L23.0 8.5 V26.5 H3.5 Z" fill="#d8dade" stroke="#b4b7bd" stroke-width="1"/><path d="M18.0 3.5 V8.5 H23.0" fill="#ececec" stroke="#b4b7bd" stroke-width="0.8"/><rect x="5.5" y="13.2" width="15.5" height="1.6" fill="#9fb7d8"/><rect x="5.5" y="15" width="4.6" height="9.8" fill="#c2c6cd"/><rect x="10.8" y="15" width="4.6" height="9.8" fill="#c2c6cd"/><rect x="16.1" y="15" width="4.6" height="9.8" fill="#c2c6cd"/><rect x="3.6" y="3.2" width="13" height="9" fill="#fff" stroke="#566c94" stroke-width="1"/><rect x="12.6" y="4.4" width="3" height="1.3" fill="#3f86dd"/><path d="M5.6 7 H10.8 M5.6 9.4 H11.6" stroke="#4a8fe0" stroke-width="1.2"/><path d="M1.2 3 V12.4 M0.2 3 H2.4 M0.2 12.4 H2.4 M3.4 0.9 H16.8 M3.4 0 V2 M16.8 0 V2" stroke="#ef7f3a" stroke-width="0.9" fill="none"/></svg>
<svg style="left:360px;top:54.8px" width="24" height="27" viewBox="0 0 24 27"><path d="M2.5 0.5 H18 L22.5 5 V7.5 H2.5 Z" fill="#cfc7b0" stroke="#a8a08a" stroke-width="0.8"/><path d="M18 0.5 V5 H22.5" fill="#e1dccb" stroke="#a8a08a" stroke-width="0.7"/><path d="M5 3 H11 M13 3 H16" stroke="#a8a7a0" stroke-width="1.1"/><path d="M2 7.7 H23" stroke="#ef7f3a" stroke-width="0.9"/><rect x="3" y="8.9" width="19.5" height="16.5" fill="#fff" stroke="#51658e" stroke-width="0.9"/><rect x="4.2" y="10.2" width="5.2" height="2" fill="#2f6fd0"/><rect x="4.2" y="12.4" width="5.2" height="12" fill="#cdd4e0"/><rect x="4.9" y="12.6" width="2" height="11.6" fill="#e9edf4"/><rect x="10.2" y="10.2" width="5.2" height="2" fill="#2f6fd0"/><rect x="10.2" y="12.4" width="5.2" height="12" fill="#cdd4e0"/><rect x="10.899999999999999" y="12.6" width="2" height="11.6" fill="#e9edf4"/><rect x="16.2" y="10.2" width="5.2" height="2" fill="#2f6fd0"/><rect x="16.2" y="12.4" width="5.2" height="12" fill="#cdd4e0"/><rect x="16.9" y="12.6" width="2" height="11.6" fill="#e9edf4"/><path d="M0.8 8.6 V25.6 M0 8.6 H1.8 M0 25.6 H1.8" stroke="#ef7f3a" stroke-width="0.9"/></svg>
<svg style="left:399.4px;top:54.3px" width="15" height="15" viewBox="0 0 15 15"><path d="M0.7 7.8 H4 L5.4 9.2 V14 H0.7 Z" fill="#fff" stroke="#ababab" stroke-width="0.8"/><path d="M9.2 7.8 H12.5 L13.9 9.2 V14 H9.2 Z" fill="#fff" stroke="#ababab" stroke-width="0.8"/><path d="M1.6 6.6 Q2.6 1.8 8.4 2.6 V0.6 L12.8 4.2 L8.4 7.6 V5.4 Q4.6 4.8 3.6 6.8 Z" fill="#3b8fe0" stroke="#2270bd" stroke-width="0.5"/></svg>
<svg style="left:399.4px;top:73.3px" width="15" height="15" viewBox="0 0 15 15"><rect x="0.6" y="7.6" width="5" height="6.4" fill="#1b3a6b" stroke="#0f2346" stroke-width="0.6"/><rect x="2.2" y="9" width="2.2" height="2.4" fill="#6fa4dc"/><path d="M9.2 7.8 H12.5 L13.9 9.2 V14 H9.2 Z" fill="#fff" stroke="#ababab" stroke-width="0.8"/><path d="M1.6 6.6 Q2.6 1.8 8.4 2.6 V0.6 L12.8 4.2 L8.4 7.6 V5.4 Q4.6 4.8 3.6 6.8 Z" fill="#3b8fe0" stroke="#2270bd" stroke-width="0.5"/></svg>
<svg style="left:490.4px;top:54.8px" width="28" height="28" viewBox="0 0 28 28"><path d="M0.8 0.4 H21 V6 H19.6 Q19.2 3.4 16 3.4 H7.4 L14.6 11.4 L6.6 19.6 H16.6 Q20.2 19.6 20.8 16.4 H22.2 L21.2 23 H0.4 V21.4 L9 12 L0.8 2.4 Z" fill="#0c0c0c"/><path d="M17 14.5 H24.1 L26.6 17.0 V26.5 H17 Z" fill="#fff" stroke="#9a9a9a" stroke-width="1"/><path d="M24.1 14.5 V17.0 H26.6" fill="#ececec" stroke="#9a9a9a" stroke-width="0.8"/><rect x="18.3" y="18.2" width="7" height="1.6" fill="#3f7fd6"/><path d="M18.3 21.3 H25.3 M18.3 23.6 H25.3 M20.6 19.8 V25.6 M23 19.8 V25.6" stroke="#9fb4d2" stroke-width="0.8"/><path d="M19 16.5 H22" stroke="#5b93dd" stroke-width="0.9"/></svg>
<svg style="left:525.8px;top:55px" width="13" height="14" viewBox="0 0 13 14"><rect x="0.8" y="0.8" width="10.8" height="12.4" fill="#fff" stroke="#9c9c9c" stroke-width="0.9"/><path d="M2.6 3.6 L3.8 5 L6 1.8 M2.6 8 L3.8 9.4 L6 6.2" stroke="#2f7fd6" stroke-width="1.2" fill="none"/><path d="M9.2 0.4 V10.4" stroke="#e12a22" stroke-width="1.3"/><path d="M6.8 9 L9.2 12.4 L11.6 9 Z" fill="#e12a22"/></svg>
<svg style="left:525.4px;top:73.4px" width="14" height="15" viewBox="0 0 14 15"><rect x="0.6" y="3.6" width="10.6" height="10.4" fill="#eaeaea" stroke="#a4a4a4" stroke-width="0.8"/><rect x="1.8" y="2.4" width="10.6" height="10.4" fill="#fff" stroke="#9c9c9c" stroke-width="0.8"/><path d="M3 6.4 H11.4 M3 9.2 H11.4 M5.8 5 V12 M8.6 5 V12" stroke="#4d8de0" stroke-width="0.9"/><path d="M2.6 0.4 L4.6 3.4 L6.4 0.6 M7.4 0.6 V3 M5.8 2 L7.4 3.8 L9 2 M10 0.6 L11.6 3.4 L13.6 0.4" stroke="#2e9c3a" stroke-width="1.3" fill="none"/></svg>
<svg style="left:622px;top:55.2px" width="14" height="14" viewBox="0 0 14 14"><rect x="2.2" y="2.6" width="9.6" height="10" fill="#e4e4e4" stroke="#b4b4b4" stroke-width="0.9"/><path d="M1 3.8 H13 M3.4 1 V4 M6 1 V4 M8.6 1 V4 M11 1 V4" stroke="#b9b9b9" stroke-width="1"/><path d="M5 11.4 L11.6 4.8 L13.4 6.6 L6.8 13 L4.4 13.6 Z" fill="#d2d2d2" stroke="#a9a9a9" stroke-width="0.7"/></svg>
<svg style="left:621.8px;top:76px" width="15" height="12" viewBox="0 0 15 12"><rect x="0.5" y="0.5" width="13.6" height="10.4" fill="#cfcfcf" stroke="#b6b6b6" stroke-width="0.9"/><circle cx="8" cy="4.8" r="3.1" fill="#e9e9e9" stroke="#bdbdbd" stroke-width="0.8"/><path d="M5.8 7 L2 10" stroke="#e2e2e2" stroke-width="1.6"/></svg>
<svg style="left:622.4px;top:92.6px" width="14" height="15" viewBox="0 0 14 15"><path d="M0.8 0.6 H7.600000000000001 L10.600000000000001 3.6 V13.2 H0.8 Z" fill="#fff" stroke="#9c9c9c" stroke-width="1"/><path d="M7.600000000000001 0.6 V3.6 H10.600000000000001" fill="#ececec" stroke="#9c9c9c" stroke-width="0.8"/><path d="M2.6 5 H7 M2.6 7.2 H7 M2.6 9.4 H6" stroke="#c7c7c7" stroke-width="0.9"/><rect x="7.2" y="5.6" width="6" height="2.6" rx="0.6" fill="#3cb043"/><path d="M10.2 8.2 V12" stroke="#2c8f33" stroke-width="1.2"/><path d="M7.8 9.6 H12.6 L10.2 12 Z" fill="#3cb043"/><rect x="8.4" y="12" width="3.6" height="2" rx="0.5" fill="#3cb043"/></svg>
<svg style="left:750px;top:57px" width="28" height="26" viewBox="0 0 28 26"><rect x="12.5" y="2" width="14" height="13.5" fill="#f3f6fb" stroke="#8fa5c9" stroke-width="0.8"/><rect x="12.9" y="2.4" width="13.2" height="2" fill="#f4a73c"/><path d="M21 6.5 H25.5 M21 9 H25.5 M21 11.5 H25.5" stroke="#9db4d8" stroke-width="1"/><rect x="12.5" y="4.8" width="8" height="8" fill="#2b5cb8" stroke="#1d3f8a" stroke-width="0.5"/><path d="M14 6.8 L15.4 11 L16.5 8 L17.6 11 L19 6.8" stroke="#fff" stroke-width="1.1" fill="none"/><rect x="5" y="10.5" width="14" height="14" fill="#eef3f9" stroke="#8fa5c9" stroke-width="0.8"/><path d="M13.5 17 H18 M13.5 19.5 H18 M13.5 22 H18" stroke="#9db4d8" stroke-width="1"/><rect x="5" y="11.8" width="8.2" height="8.2" fill="#2f9a45" stroke="#1e6e2e" stroke-width="0.5"/><path d="M6.8 13.6 L11.4 18.4 M11.4 13.6 L6.8 18.4" stroke="#fff" stroke-width="1.2"/><path d="M0.5 1.2 Q7 0.4 9.4 5 L11.6 3.6 L11 9.4 L5.6 7.6 L7.6 6.2 Q5.8 3.2 0.5 3.6 Z" fill="#2f9be3" stroke="#1b78c0" stroke-width="0.5"/></svg>
<svg style="left:804.4px;top:56px" width="15" height="12" viewBox="0 0 15 12"><rect x="0.5" y="0.5" width="12.6" height="10" fill="#fff" stroke="#8a94a8" stroke-width="0.8"/><rect x="0.9" y="0.9" width="11.8" height="2.2" fill="#3b62c4"/><path d="M2.4 5.4 H7 M2.4 7.6 H6" stroke="#b9c3d6" stroke-width="0.9"/><path d="M5.4 9.8 L6.2 7.2 L12 1.6 L13.8 3.4 L8 9 Z" fill="#f1c232" stroke="#8d6a10" stroke-width="0.6"/><path d="M5.4 9.8 L6.2 7.6 L7.6 9 Z" fill="#444"/></svg>
<svg style="left:872px;top:54.6px" width="24" height="28" viewBox="0 0 24 28"><path d="M3.5 2.5 H17.0 L23.0 8.5 V26.5 H3.5 Z" fill="#fdfdfd" stroke="#c3c3c3" stroke-width="1"/><path d="M17.0 2.5 V8.5 H23.0" fill="#ececec" stroke="#c3c3c3" stroke-width="0.8"/><path d="M2.6 11.5 V4 Q2.6 0.8 4.9 0.8 Q7.2 0.8 7.2 4 V12 Q7.2 13.6 5.9 13.6 Q4.6 13.6 4.6 12 V5" fill="none" stroke="#6f6f6f" stroke-width="1"/></svg>
<svg style="left:930.4px;top:55.4px" width="13" height="14" viewBox="0 0 13 14"><rect x="1.8" y="0.5" width="10.4" height="12.4" fill="#7f9fd0" stroke="#4a6a9e" stroke-width="0.8"/><path d="M3 2.6 H11.4 M3 4.6 H11.4 M3 6.6 H11.4 M3 8.6 H11.4 M3 10.6 H11.4" stroke="#c9d9f0" stroke-width="0.9"/><path d="M0.4 2 H2.6 M0.4 4 H2.6 M0.4 6 H2.6 M0.4 8 H2.6 M0.4 10 H2.6 M0.4 12 H2.6" stroke="#6b6b6b" stroke-width="0.8"/></svg>
<svg style="left:43px;top:208.6px" width="14" height="12" viewBox="0 0 14 12"><rect x="0.5" y="0.5" width="13" height="10.4" fill="#eef2f9" stroke="#c3cbda" stroke-width="0.9"/><path d="M0.3 11 H13.9 M13.6 0.6 V11" stroke="#66758e" stroke-width="1" fill="none"/><path d="M1 2.6 H13 M1 6.6 H13 M1 8.8 H13 M4.2 1 V10.4 M7.6 1 V10.4 M10.8 1 V10.4" stroke="#fff" stroke-width="0.8"/><rect x="0.9" y="3.4" width="7" height="2.3" fill="#f2a324"/><path d="M7.8 4.6 L10.8 1.8 L11.6 3.3 H13.7 V5.9 H11.6 L10.8 7.6 Z" fill="#1e8cf0" stroke="#1a6fd0" stroke-width="0.4"/><circle cx="10.8" cy="4.6" r="1.2" fill="#5cb8ff"/></svg>
<svg style="left:116px;top:207.4px" width="14" height="13" viewBox="0 0 14 13"><rect x="0.5" y="0.5" width="12.6" height="9.6" fill="#fff" stroke="#b3b3b3" stroke-width="0.8"/><rect x="1" y="1" width="11.6" height="2" fill="#d8d8d8"/><rect x="1" y="3.6" width="11.6" height="2" fill="#f4a231"/><rect x="1" y="6.2" width="11.6" height="2" fill="#f4a231"/><path d="M4.4 1 V9.6 M8.4 1 V9.6" stroke="#fff" stroke-width="0.7"/><path d="M9.6 5.4 V13 M5.8 9.2 H13.4" stroke="#1f8f2a" stroke-width="3.4"/><path d="M9.6 6.2 V12.2 M6.6 9.2 H12.6" stroke="#56d35c" stroke-width="1.8"/></svg>
<svg style="left:193px;top:207.2px" width="14" height="14" viewBox="0 0 14 14"><path d="M0.6 3 L6.6 0.6 L13 2.6 V9.4 L6.6 12 L0.6 9.8 Z" fill="#b5854a" stroke="#7b5526" stroke-width="0.6"/><path d="M0.6 3 L6.8 5 L13 2.6 M6.8 5 V12" stroke="#8a6230" stroke-width="0.6" fill="none"/><path d="M0.6 3 L6.6 0.6 L13 2.6 L6.8 5 Z" fill="#d2a66a"/><path d="M9.4 5.8 V13.4 M5.6 9.6 H13.2" stroke="#1b62c4" stroke-width="3.4"/><path d="M9.4 6.6 V12.6 M6.4 9.6 H12.4" stroke="#4aa3f5" stroke-width="1.8"/></svg>
<svg style="left:290.2px;top:208.6px" width="14" height="12" viewBox="0 0 14 12"><rect x="0.5" y="0.5" width="13" height="10.4" fill="#eef2f9" stroke="#c3cbda" stroke-width="0.9"/><path d="M0.3 11 H13.9 M13.6 0.6 V11" stroke="#66758e" stroke-width="1" fill="none"/><path d="M1 2.6 H13 M1 6.6 H13 M1 8.8 H13 M4.2 1 V10.4 M7.6 1 V10.4 M10.8 1 V10.4" stroke="#fff" stroke-width="0.8"/><rect x="0.9" y="3.4" width="12.2" height="2.3" fill="#f2a324"/><path d="M7.6 1.4 L13.2 7.6 M13.2 1.2 L8 7.8" stroke="#e0301e" stroke-width="1.3"/></svg>
<svg style="left:370.4px;top:207px" width="11" height="14" viewBox="0 0 11 14"><path d="M4.6 0.6 H10 L6.8 5.4 H9.6 L2.4 13.2 L4.4 7.4 H1.6 Z" fill="#fbd34a" stroke="#c99a12" stroke-width="0.8" stroke-linejoin="round"/></svg>
<svg style="left:479.6px;top:206.6px" width="14" height="15" viewBox="0 0 14 15"><rect x="0.6" y="0.6" width="9.6" height="12.8" fill="#ececec" stroke="#8e8e8e" stroke-width="0.8"/><rect x="1.8" y="1.8" width="7.2" height="2.6" fill="#49b04f"/><path d="M2 6.4 H9 M2 8.6 H9 M2 10.8 H9" stroke="#9c9c9c" stroke-width="1.1" stroke-dasharray="1.6 1"/><path d="M5.2 6.6 H9.6 Q11 6.6 11 8.2 V13.6 H5.2 Z" fill="#f0b429" stroke="#a87810" stroke-width="0.6"/><ellipse cx="11.2" cy="10" rx="2.4" ry="1" fill="#d9d9d9" stroke="#8a8a8a" stroke-width="0.5"/><path d="M8.8 10 V13 Q11.2 14.4 13.6 13 V10" fill="#bdbdbd" stroke="#8a8a8a" stroke-width="0.5"/></svg>
<svg style="left:566.6px;top:207.6px" width="14" height="14" viewBox="0 0 14 14"><rect x="3.8" y="0.6" width="6.4" height="6.4" fill="#c69a5c" stroke="#86602a" stroke-width="0.6"/><rect x="6.0" y="0.6" width="2" height="2.9" fill="#3d6fc0"/><rect x="3.8" y="0.6" width="6.4" height="1.4" fill="#dcb87e" opacity="0.8"/><rect x="0.5" y="7" width="6.4" height="6.4" fill="#c69a5c" stroke="#86602a" stroke-width="0.6"/><rect x="2.7" y="7" width="2" height="2.9" fill="#3d6fc0"/><rect x="0.5" y="7" width="6.4" height="1.4" fill="#dcb87e" opacity="0.8"/><rect x="7.2" y="7" width="6.4" height="6.4" fill="#c69a5c" stroke="#86602a" stroke-width="0.6"/><rect x="9.4" y="7" width="2" height="2.9" fill="#3d6fc0"/><rect x="7.2" y="7" width="6.4" height="1.4" fill="#dcb87e" opacity="0.8"/></svg>
<svg style="left:651px;top:206.6px" width="15" height="15" viewBox="0 0 15 15"><path d="M3 0.6 H9.4 L12 3.2 V11.6 H3 Z" fill="#fff" stroke="#9c9c9c" stroke-width="1"/><path d="M9.4 0.6 V3.2 H12" fill="#ececec" stroke="#9c9c9c" stroke-width="0.8"/><path d="M4.6 4.4 H10 M4.6 6.6 H10" stroke="#4d8de0" stroke-width="1"/><path d="M5 2.4 H8" stroke="#4d8de0" stroke-width="0.8"/><rect x="0.5" y="8.4" width="5" height="5" fill="#c69a5c" stroke="#86602a" stroke-width="0.6"/><rect x="6" y="8.4" width="5" height="4" fill="#9a9a9a"/><path d="M11 9.6 H13 L14 11 V12.4 H11 Z" fill="#b9b9b9" stroke="#7c7c7c" stroke-width="0.4"/><circle cx="7.6" cy="13.2" r="1.1" fill="#444"/><circle cx="12" cy="13.2" r="1.1" fill="#444"/></svg>
<svg style="left:782.6px;top:207.4px" width="15" height="13" viewBox="0 0 15 13"><rect x="0.5" y="0.5" width="13" height="10.4" fill="#fff" stroke="#b0b0b0" stroke-width="0.8"/><rect x="1" y="1" width="12" height="2" fill="#d6d6d6"/><rect x="1" y="3.8" width="12" height="2.2" fill="#f4a231"/><path d="M1 7.6 H13 M1 9.4 H13 M4.6 1 V10.4 M8.6 1 V10.4" stroke="#e2e2e2" stroke-width="0.7"/><path d="M6.4 7 L9.4 4.6 V6 H12.6 V8 H9.4 V9.4 Z" fill="#1f74d8"/><path d="M13.6 10 L10.6 12.4 V11 H8 V9.2 H10.6 V7.8 Z" fill="#1f74d8" stroke="#fff" stroke-width="0.3"/></svg>
<svg style="left:139.6px;top:462px" width="17" height="15" viewBox="-1.5 -0.5 18 15"><g transform="rotate(-43 7.5 7)"><rect x="0.5" y="5.2" width="13" height="3.6" fill="#f2cd55" stroke="#4e4118" stroke-width="0.7"/><path d="M0.5 5.2 L-3.2 7 L0.5 8.8 Z" fill="#e6c79c" stroke="#4e4118" stroke-width="0.6"/><path d="M-3.2 7 L-1.8 6.3 V7.7 Z" fill="#222"/><rect x="13.5" y="5.2" width="1.4" height="3.6" fill="#3f9a58"/><rect x="14.9" y="5.2" width="2.4" height="3.6" rx="0.8" fill="#e25d6a" stroke="#4e4118" stroke-width="0.4"/></g></svg>
<svg style="left:172.4px;top:463.8px" width="14" height="11" viewBox="0 0 14 11"><rect x="0.6" y="0.6" width="12.8" height="9" fill="#fff" stroke="#3f6aa8" stroke-width="1"/><rect x="6" y="1.8" width="6" height="2.4" fill="#d4d4d4" stroke="#9a9a9a" stroke-width="0.5"/><rect x="6" y="5.6" width="6" height="2.4" fill="#d4d4d4" stroke="#9a9a9a" stroke-width="0.5"/><path d="M2 3 H5 M2 6.8 H5" stroke="#8c8c8c" stroke-width="0.9"/></svg>
<svg style="left:195px;top:464.2px" width="14" height="11" viewBox="0 0 14 11"><rect x="0.5" y="0.5" width="13" height="9.6" fill="#fff" stroke="#b9c6da" stroke-width="0.8"/><path d="M1 2.8 H13 M1 5 H13 M1 7.2 H13" stroke="#c3cfe2" stroke-width="0.9"/><path d="M0.2 10.6 H13.8" stroke="#5b7fb5" stroke-width="0.9"/></svg>
<svg style="left:226.6px;top:462px" width="12" height="14" viewBox="0 0 12 14"><path d="M0.8 2 H7.800000000000001 L10.4 4.6 V13 H0.8 Z" fill="#f1f1f1" stroke="#c2c2c2" stroke-width="1"/><path d="M7.800000000000001 2 V4.6 H10.4" fill="#ececec" stroke="#c2c2c2" stroke-width="0.8"/><path d="M3.4 6 V2 Q3.4 0.6 4.8 0.6 Q6.2 0.6 6.2 2 V6.4 Q6.2 7.2 5.5 7.2 Q4.8 7.2 4.8 6.4 V3" fill="none" stroke="#b1b1b1" stroke-width="0.8"/></svg>
<svg style="left:1061.2px;top:461.8px" width="14" height="14" viewBox="0 0 14 14"><path d="M7 0.6 Q8.2 0.6 8.2 2 Q11.4 3 11.4 7 Q11.4 10 13.4 11.4 H0.6 Q2.6 10 2.6 7 Q2.6 3 5.8 2 Q5.8 0.6 7 0.6 Z" fill="#f4b315" stroke="#c98a08" stroke-width="0.6"/><path d="M4.2 4.4 Q3.6 7 3.4 10.4 H6 Q5.4 7 6.2 3.2 Q4.8 3.4 4.2 4.4Z" fill="#fde28a"/><ellipse cx="7" cy="12.4" rx="1.8" ry="1.1" fill="#d9920a"/></svg>
<span class="t" style="left:459.00px;top:7.50px;font-size:13.7px;font-weight:400;color:#111;transform:scaleX(0.9256);-webkit-text-stroke-width:0.08px;">Sales order (1 - usmf) - Sales order: 000760, Sparrow Retail</span>
<span class="t" style="left:22.60px;top:31.95px;font-size:11.5px;font-weight:400;color:#fff;transform:scaleX(0.8364);">File</span>
<span class="t" style="left:82.50px;top:31.95px;font-size:11.5px;font-weight:400;color:#1e2a66;transform:scaleX(0.8332);">Sales order</span>
<span class="t" style="left:157.40px;top:31.95px;font-size:11.5px;font-weight:400;color:#1e2a66;transform:scaleX(0.8026);">Sell</span>
<span class="t" style="left:197.90px;top:31.95px;font-size:11.5px;font-weight:400;color:#1e2a66;transform:scaleX(0.8902);">Manage</span>
<span class="t" style="left:260.10px;top:31.95px;font-size:11.5px;font-weight:400;color:#1e2a66;transform:scaleX(0.8909);">Pick and pack</span>
<span class="t" style="left:348.60px;top:31.95px;font-size:11.5px;font-weight:400;color:#1e2a66;transform:scaleX(0.9221);">Invoice</span>
<span class="t" style="left:407.20px;top:31.95px;font-size:11.5px;font-weight:400;color:#1e2a66;transform:scaleX(0.8400);">Retail</span>
<span class="t" style="left:457.70px;top:31.95px;font-size:11.5px;font-weight:400;color:#1e2a66;transform:scaleX(0.8309);">General</span>
<span class="t" style="left:516.90px;top:31.95px;font-size:11.5px;font-weight:400;color:#1e2a66;transform:scaleX(0.8997);">Warehouse management</span>
<span class="t" style="left:658.70px;top:31.95px;font-size:11.5px;font-weight:400;color:#1e2a66;transform:scaleX(0.9094);">Transportation management</span>
<span class="t" style="left:65.00px;top:112.25px;font-size:11.5px;font-weight:400;color:#1e2a66;transform:scaleX(0.8950);">New</span>
<span class="t" style="left:173.40px;top:112.25px;font-size:11.5px;font-weight:400;color:#1e2a66;transform:scaleX(0.9202);">Maintain</span>
<span class="t" style="left:254.00px;top:112.25px;font-size:11.5px;font-weight:400;color:#1e2a66;transform:scaleX(0.8995);">Payments</span>
<span class="t" style="left:337.75px;top:112.25px;font-size:11.5px;font-weight:400;color:#1e2a66;transform:scaleX(0.8512);">Show</span>
<span class="t" style="left:425.70px;top:112.25px;font-size:11.5px;font-weight:400;color:#1e2a66;transform:scaleX(0.8935);">Copy</span>
<span class="t" style="left:538.60px;top:112.25px;font-size:11.5px;font-weight:400;color:#1e2a66;transform:scaleX(0.8496);">View</span>
<span class="t" style="left:646.60px;top:112.25px;font-size:11.5px;font-weight:400;color:#1e2a66;transform:scaleX(0.9025);">Functions</span>
<span class="t" style="left:793.90px;top:112.25px;font-size:11.5px;font-weight:400;color:#1e2a66;transform:scaleX(0.9105);">Attachments</span>
<span class="t" style="left:946.30px;top:112.25px;font-size:11.5px;font-weight:400;color:#1e2a66;transform:scaleX(0.9214);">Email notification</span>
<span class="t" style="left:18.80px;top:84.15px;font-size:11.5px;font-weight:400;color:#1e2a66;transform:scaleX(0.7644);">Sales</span>
<span class="t" style="left:18.20px;top:96.85px;font-size:11.5px;font-weight:400;color:#1e2a66;transform:scaleX(0.8935);">order</span>
<span class="t" style="left:156.00px;top:84.15px;font-size:11.5px;font-weight:400;color:#1c1c3c;transform:scaleX(0.8069);">Edit</span>
<span class="t" style="left:254.20px;top:84.15px;font-size:11.5px;font-weight:400;color:#b4b4b4;transform:scaleX(0.8838);">Payments</span>
<span class="t" style="left:315.90px;top:84.15px;font-size:11.5px;font-weight:400;color:#1e2a66;transform:scaleX(0.8669);">Header</span>
<span class="t" style="left:321.80px;top:96.85px;font-size:11.5px;font-weight:400;color:#1e2a66;transform:scaleX(0.9168);">view</span>
<span class="t" style="left:362.70px;top:84.15px;font-size:11.5px;font-weight:400;color:#1e2a66;transform:scaleX(0.8966);">Line</span>
<span class="t" style="left:361.80px;top:96.85px;font-size:11.5px;font-weight:400;color:#1e2a66;transform:scaleX(0.9168);">view</span>
<span class="t" style="left:490.60px;top:84.15px;font-size:11.5px;font-weight:400;color:#1e2a66;transform:scaleX(0.9119);">Totals</span>
<span class="t" style="left:731.00px;top:84.15px;font-size:11.5px;font-weight:400;color:#1e2a66;transform:scaleX(0.8846);">Generate from</span>
<span class="t" style="left:739.50px;top:96.85px;font-size:11.5px;font-weight:400;color:#1e2a66;transform:scaleX(0.9318);">template</span>
<span class="t" style="left:856.00px;top:84.15px;font-size:11.5px;font-weight:400;color:#1e2a66;transform:scaleX(0.9199);">Attachments</span>
<span class="t" style="left:66.50px;top:54.05px;font-size:11.5px;font-weight:400;color:#1e2a66;transform:scaleX(0.8627);">Service order</span>
<span class="t" style="left:66.50px;top:72.85px;font-size:11.5px;font-weight:400;color:#1e2a66;transform:scaleX(0.8712);">Purchase order</span>
<span class="t" style="left:66.50px;top:91.85px;font-size:11.5px;font-weight:400;color:#1e2a66;transform:scaleX(0.8853);">Direct delivery</span>
<span class="t" style="left:201.30px;top:54.05px;font-size:11.5px;font-weight:400;color:#1e2a66;transform:scaleX(0.8421);">Delete</span>
<span class="t" style="left:201.30px;top:72.85px;font-size:11.5px;font-weight:400;color:#1e2a66;transform:scaleX(0.8572);">Cancel</span>
<span class="t" style="left:416.50px;top:54.05px;font-size:11.5px;font-weight:400;color:#1e2a66;transform:scaleX(0.8909);">From all</span>
<span class="t" style="left:416.50px;top:72.85px;font-size:11.5px;font-weight:400;color:#1e2a66;transform:scaleX(0.9169);">From journal</span>
<span class="t" style="left:542.70px;top:54.05px;font-size:11.5px;font-weight:400;color:#1e2a66;transform:scaleX(0.8724);">Order events</span>
<span class="t" style="left:542.70px;top:72.85px;font-size:11.5px;font-weight:400;color:#1e2a66;transform:scaleX(0.8715);">Detailed status</span>
<span class="t" style="left:639.00px;top:54.05px;font-size:11.5px;font-weight:400;color:#b4b4b4;transform:scaleX(0.8893);">Order credit</span>
<span class="t" style="left:639.00px;top:72.85px;font-size:11.5px;font-weight:400;color:#b4b4b4;transform:scaleX(0.8438);">Sales order recap</span>
<span class="t" style="left:639.00px;top:91.85px;font-size:11.5px;font-weight:400;color:#1e2a66;transform:scaleX(0.8869);">Order holds</span>
<span class="t" style="left:821.70px;top:54.05px;font-size:11.5px;font-weight:400;color:#1e2a66;transform:scaleX(0.8753);">Notes</span>
<span class="t" style="left:946.30px;top:54.05px;font-size:11.5px;font-weight:400;color:#1e2a66;transform:scaleX(0.9262);">Email notification log</span>
<span class="t" style="left:16.00px;top:137.50px;font-size:13.3px;font-weight:400;color:#2ba13a;transform:scaleX(0.9421);">000760 : US-008 - Sparrow Retail</span>
<span class="t" style="left:993.00px;top:136.05px;font-size:11.5px;font-weight:400;color:#222222;transform:scaleX(0.8834);">Open order</span>
<span class="t" style="left:29.70px;top:161.65px;font-size:11.5px;font-weight:700;color:#151515;transform:scaleX(0.9559);">Sales order header</span>
<span class="t" style="left:29.70px;top:183.45px;font-size:11.5px;font-weight:700;color:#151515;transform:scaleX(0.9517);">Sales order lines</span>
<span class="t" style="left:59.50px;top:205.95px;font-size:11.5px;font-weight:400;color:#1e2a66;transform:scaleX(0.9167);">Add line</span>
<span class="t" style="left:132.60px;top:205.95px;font-size:11.5px;font-weight:400;color:#1e2a66;transform:scaleX(0.8962);">Add lines</span>
<span class="t" style="left:210.30px;top:205.95px;font-size:11.5px;font-weight:400;color:#1e2a66;transform:scaleX(0.9149);">Add products</span>
<span class="t" style="left:307.30px;top:205.95px;font-size:11.5px;font-weight:400;color:#1e2a66;transform:scaleX(0.8546);">Remove</span>
<span class="t" style="left:386.20px;top:205.95px;font-size:11.5px;font-weight:400;color:#1e2a66;transform:scaleX(0.8635);">Sales order line</span>
<span class="t" style="left:496.50px;top:205.95px;font-size:11.5px;font-weight:400;color:#1e2a66;transform:scaleX(0.8652);">Financials</span>
<span class="t" style="left:583.40px;top:205.95px;font-size:11.5px;font-weight:400;color:#1e2a66;transform:scaleX(0.9089);">Inventory</span>
<span class="t" style="left:668.10px;top:205.95px;font-size:11.5px;font-weight:400;color:#1e2a66;transform:scaleX(0.9060);">Product and supply</span>
<span class="t" style="left:799.60px;top:205.95px;font-size:11.5px;font-weight:400;color:#1e2a66;transform:scaleX(0.8919);">Update line</span>
<span class="t" style="left:883.80px;top:205.95px;font-size:11.5px;font-weight:400;color:#1e2a66;transform:scaleX(0.8906);">Warehouse</span>
<span class="t" style="left:52.20px;top:227.95px;font-size:11.5px;font-weight:400;color:#222222;transform:scaleX(0.9424);">Type</span>
<span class="t" style="left:89.70px;top:227.95px;font-size:11.5px;font-weight:400;color:#222222;transform:scaleX(0.9064);">Variant number</span>
<span class="t" style="left:176.80px;top:227.95px;font-size:11.5px;font-weight:400;color:#222222;transform:scaleX(0.9293);">Item number</span>
<span class="t" style="left:252.40px;top:227.95px;font-size:11.5px;font-weight:400;color:#222222;transform:scaleX(0.9077);">Product name</span>
<span class="t" style="left:338.20px;top:227.95px;font-size:11.5px;font-weight:400;color:#222222;transform:scaleX(0.9293);">Quantity</span>
<span class="t" style="left:388.50px;top:227.95px;font-size:11.5px;font-weight:400;color:#222222;transform:scaleX(0.8700);">Unit</span>
<span class="t" style="left:429.00px;top:227.95px;font-size:11.5px;font-weight:400;color:#222222;transform:scaleX(0.9089);">Adjusted unit price</span>
<span class="t" style="left:525.80px;top:227.95px;font-size:11.5px;font-weight:400;color:#222222;transform:scaleX(0.8700);">Color</span>
<span class="t" style="left:602.80px;top:227.95px;font-size:11.5px;font-weight:400;color:#222222;transform:scaleX(0.8700);">Site</span>
<span class="t" style="left:656.50px;top:227.95px;font-size:11.5px;font-weight:400;color:#222222;transform:scaleX(0.8649);">Warehouse</span>
<span class="t" style="left:769.90px;top:227.95px;font-size:11.5px;font-weight:400;color:#222222;transform:scaleX(0.9140);">Unit price</span>
<span class="t" style="left:851.80px;top:227.95px;font-size:11.5px;font-weight:400;color:#222222;transform:scaleX(0.8804);">Discount</span>
<span class="t" style="left:928.40px;top:227.95px;font-size:11.5px;font-weight:400;color:#222222;transform:scaleX(0.9234);">Net amount</span>
<span class="t" style="left:1020.40px;top:227.95px;font-size:11.5px;font-weight:400;color:#222222;transform:scaleX(0.8647);">Discou</span>
<span class="t" style="left:89.70px;top:244.05px;font-size:11.5px;font-weight:400;color:#222222;transform:scaleX(0.8455);">VN-000151</span>
<span class="t" style="left:176.60px;top:244.05px;font-size:11.5px;font-weight:400;color:#222222;transform:scaleX(0.8049);">5306</span>
<span class="t" style="left:252.40px;top:244.05px;font-size:11.5px;font-weight:400;color:#222222;transform:scaleX(0.9076);">Litware Mobil...</span>
<span class="t" style="left:388.50px;top:244.05px;font-size:11.5px;font-weight:400;color:#222222;transform:scaleX(0.8700);">ea</span>
<span class="t" style="left:481.60px;top:244.05px;font-size:11.5px;font-weight:400;color:#222222;transform:scaleX(0.8033);">0.00000</span>
<span class="t" style="left:525.80px;top:244.05px;font-size:11.5px;font-weight:400;color:#222222;transform:scaleX(0.8676);">Black</span>
<span class="t" style="left:602.80px;top:244.05px;font-size:11.5px;font-weight:400;color:#222222;transform:scaleX(0.8700);">1</span>
<span class="t" style="left:785.70px;top:244.05px;font-size:11.5px;font-weight:400;color:#222222;transform:scaleX(0.8128);">349.99</span>
<span class="t" style="left:89.70px;top:262.15px;font-size:11.5px;font-weight:400;color:#222222;transform:scaleX(0.8455);">VN-000151</span>
<span class="t" style="left:176.60px;top:262.15px;font-size:11.5px;font-weight:400;color:#222222;transform:scaleX(0.8049);">5306</span>
<span class="t" style="left:252.40px;top:262.15px;font-size:11.5px;font-weight:400;color:#222222;transform:scaleX(0.9076);">Litware Mobil...</span>
<span class="t" style="left:388.50px;top:262.15px;font-size:11.5px;font-weight:400;color:#222222;transform:scaleX(0.8700);">ea</span>
<span class="t" style="left:481.60px;top:262.15px;font-size:11.5px;font-weight:400;color:#222222;transform:scaleX(0.8033);">0.00000</span>
<span class="t" style="left:525.80px;top:262.15px;font-size:11.5px;font-weight:400;color:#222222;transform:scaleX(0.8676);">Black</span>
<span class="t" style="left:602.80px;top:262.15px;font-size:11.5px;font-weight:400;color:#222222;transform:scaleX(0.8700);">1</span>
<span class="t" style="left:785.70px;top:262.15px;font-size:11.5px;font-weight:400;color:#222222;transform:scaleX(0.8128);">349.99</span>
<span class="t" style="left:359.90px;top:244.05px;font-size:11.5px;font-weight:400;color:#222222;transform:scaleX(0.8084);">2.00</span>
<span class="t" style="left:359.90px;top:262.15px;font-size:11.5px;font-weight:400;color:#222222;transform:scaleX(0.8084);">4.00</span>
<span class="t" style="left:954.70px;top:244.05px;font-size:11.5px;font-weight:400;color:#222222;transform:scaleX(0.8128);">699.98</span>
<span class="t" style="left:947.60px;top:262.15px;font-size:11.5px;font-weight:400;color:#222222;transform:scaleX(0.7975);">1,399.96</span>
<span class="t" style="left:657.00px;top:244.05px;font-size:11.5px;font-weight:400;color:#222222;transform:scaleX(0.7195);">11</span>
<span class="t" style="left:657.60px;top:262.15px;font-size:11.5px;font-weight:400;color:#222222;transform:scaleX(0.7027);">11</span>
<span class="t" style="left:30.30px;top:435.95px;font-size:11.5px;font-weight:700;color:#151515;transform:scaleX(0.9640);">Line details</span>
<span class="t" style="left:1075.90px;top:135.55px;font-size:11.5px;font-weight:700;color:#595959;transform:scaleX(0.8422);">Latest sales orders</span>
<span class="t" style="left:1080.00px;top:153.65px;font-size:11.5px;font-weight:400;color:#222;transform:scaleX(0.8366);">Sales order</span>
<span class="t" style="left:1223.60px;top:153.65px;font-size:11.5px;font-weight:400;color:#222;transform:scaleX(0.8110);">Stat</span>
<span class="t" style="left:1080.00px;top:169.95px;font-size:11.5px;font-weight:400;color:#2c6fc7;transform:scaleX(0.8156);">000760</span>
<span class="t" style="left:1220.70px;top:169.95px;font-size:11.5px;font-weight:400;color:#555;transform:scaleX(0.8644);">Ope</span>
<span class="t" style="left:1080.00px;top:188.15px;font-size:11.5px;font-weight:400;color:#2c6fc7;transform:scaleX(0.8156);">000705</span>
<span class="t" style="left:1220.70px;top:188.15px;font-size:11.5px;font-weight:400;color:#555;transform:scaleX(0.8644);">Ope</span>
<span class="t" style="left:1080.00px;top:206.35px;font-size:11.5px;font-weight:400;color:#2c6fc7;transform:scaleX(0.8156);">000676</span>
<span class="t" style="left:1220.70px;top:206.35px;font-size:11.5px;font-weight:400;color:#555;transform:scaleX(0.8920);">Invo</span>
<span class="t" style="left:1080.00px;top:224.55px;font-size:11.5px;font-weight:400;color:#2c6fc7;transform:scaleX(0.8156);">000647</span>
<span class="t" style="left:1220.70px;top:224.55px;font-size:11.5px;font-weight:400;color:#555;transform:scaleX(0.8920);">Invo</span>
<span class="t" style="left:1080.00px;top:242.75px;font-size:11.5px;font-weight:400;color:#2c6fc7;transform:scaleX(0.8156);">000590</span>
<span class="t" style="left:1220.70px;top:242.75px;font-size:11.5px;font-weight:400;color:#555;transform:scaleX(0.8920);">Invo</span>
<span class="t" style="left:1078.00px;top:260.85px;font-size:11.5px;font-weight:700;color:#333;transform:scaleX(0.7922);">...</span>
<span class="t" style="left:1221.00px;top:260.85px;font-size:11.5px;font-weight:700;color:#333;transform:scaleX(0.7922);">...</span>
<span class="t" style="left:1075.70px;top:286.95px;font-size:11.5px;font-weight:700;color:#595959;transform:scaleX(0.8983);">Related information</span>
<span class="t" style="left:1075.70px;top:309.35px;font-size:11.5px;font-weight:700;color:#595959;transform:scaleX(0.8687);">Script and image</span>
<span class="t" style="left:254.30px;top:461.95px;font-size:11.5px;font-weight:400;color:#3a3a3a;transform:scaleX(0.8998);">Identify the warehouse.</span>
<span class="t" style="left:1075.90px;top:461.95px;font-size:11.5px;font-weight:400;color:#444;transform:scaleX(0.8320);">(4)</span>
<span class="t" style="left:1101.80px;top:461.95px;font-size:11.5px;font-weight:400;color:#444;transform:scaleX(0.8031);">USD</span>
<span class="t" style="left:1132.10px;top:461.95px;font-size:11.5px;font-weight:400;color:#444;transform:scaleX(0.8948);">usmf</span>
<span class="t" style="left:1187.50px;top:461.95px;font-size:11.5px;font-weight:400;color:#2a2a2a;transform:scaleX(0.8366);">Close</span>
</div></body></html>
